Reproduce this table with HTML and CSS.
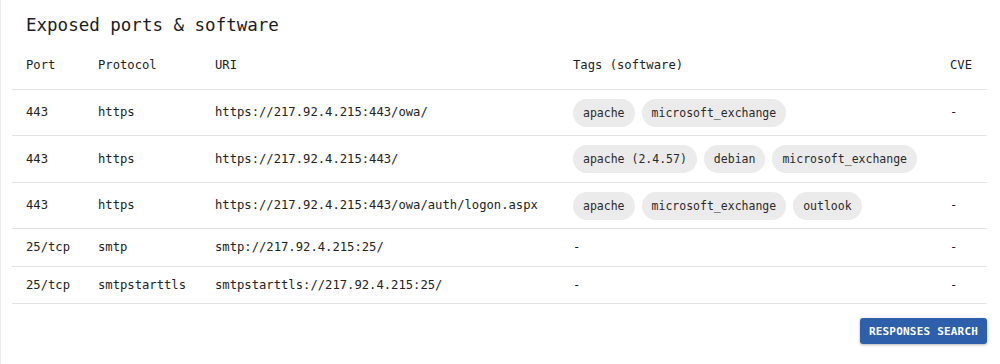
FILE: index.html
```html
<!DOCTYPE html>
<html lang="en">
<head>
  <meta charset="UTF-8" />
  <title>Exposed ports</title>
  <link rel="stylesheet" href="styles.css">
</head>
<body>
  <div class="panel">
    <h2 class="panel-title">Exposed ports &amp; software</h2>
    <table class="ports">
      <colgroup>
        <col class="c-port"><col class="c-proto"><col class="c-uri"><col class="c-tags"><col class="c-cve">
      </colgroup>
      <thead>
        <tr><th>Port</th><th>Protocol</th><th>URI</th><th>Tags (software)</th><th>CVE</th></tr>
      </thead>
      <tbody>
        <tr>
          <td>443</td><td>https</td><td>https://217.92.4.215:443/owa/</td>
          <td class="tags"><span class="chip">apache</span><span class="chip">microsoft_exchange</span></td>
          <td>-</td>
        </tr>
        <tr>
          <td>443</td><td>https</td><td>https://217.92.4.215:443/</td>
          <td class="tags"><span class="chip">apache (2.4.57)</span><span class="chip">debian</span><span class="chip">microsoft_exchange</span></td>
          <td></td>
        </tr>
        <tr>
          <td>443</td><td>https</td><td>https://217.92.4.215:443/owa/auth/logon.aspx</td>
          <td class="tags"><span class="chip">apache</span><span class="chip">microsoft_exchange</span><span class="chip">outlook</span></td>
          <td>-</td>
        </tr>
        <tr>
          <td>25/tcp</td><td>smtp</td><td>smtp://217.92.4.215:25/</td><td>-</td><td>-</td>
        </tr>
        <tr>
          <td>25/tcp</td><td>smtpstarttls</td><td>smtpstarttls://217.92.4.215:25/</td><td>-</td><td>-</td>
        </tr>
      </tbody>
    </table>
    <div class="actions">
      <button class="btn">RESPONSES SEARCH</button>
    </div>
  </div>
</body>
</html>
```

FILE: styles.css
```css
* { margin: 0; padding: 0; box-sizing: border-box; }
body {
  font-family: 'DejaVu Sans Mono', 'Liberation Mono', monospace;
  color: #222;
  background: #fff;
}

/* Card */
.panel {
  width: 1000px;
  height: 364px;
  padding: 13px 13px 0 11px;
  border-left: 1px solid #ebebeb;
}
.panel-title {
  font-size: 17.5px;
  font-weight: 400;
  line-height: 24px;
  padding-left: 14px;
  color: #1c1c1c;
}

/* Table */
.ports {
  width: 975px;
  table-layout: fixed;
  border-collapse: collapse;
  font-size: 12.2px;
}
.c-port { width: 72px; }
.c-proto { width: 117px; }
.c-uri { width: 358px; }
.c-tags { width: 377px; }
.c-cve { width: 51px; }
.ports th {
  text-align: left;
  font-weight: 400;
  height: 52px;
  padding: 6px 14px 0;
  line-height: 15px;
  vertical-align: middle;
  border-bottom: 1px solid #e3e3e3;
}
.ports td {
  padding: 11px 14px 10.5px;
  line-height: 15px;
  vertical-align: middle;
  border-bottom: 1px solid #e3e3e3;
  white-space: nowrap;
}
.ports td.tags { padding: 9px 14px 8.6px; }
.tags .chip { vertical-align: top; }

.chip {
  display: inline-block;
  height: 28px;
  line-height: 28px;
  padding: 0 10px;
  margin-right: 7px;
  border-radius: 14px;
  background: #ebebeb;
  color: #2a2a2a;
  font-size: 11.5px;
}

/* Footer button */
.actions {
  display: flex;
  justify-content: flex-end;
  padding-top: 14px;
}
.btn {
  font-family: inherit;
  font-size: 11px;
  font-weight: 700;
  letter-spacing: 0.2px;
  color: #fff;
  background: #2d5fab;
  border: none;
  border-radius: 3px;
  width: 127px;
  height: 26px;
  box-shadow: 0 1px 3px rgba(0,0,0,0.3);
}
```
